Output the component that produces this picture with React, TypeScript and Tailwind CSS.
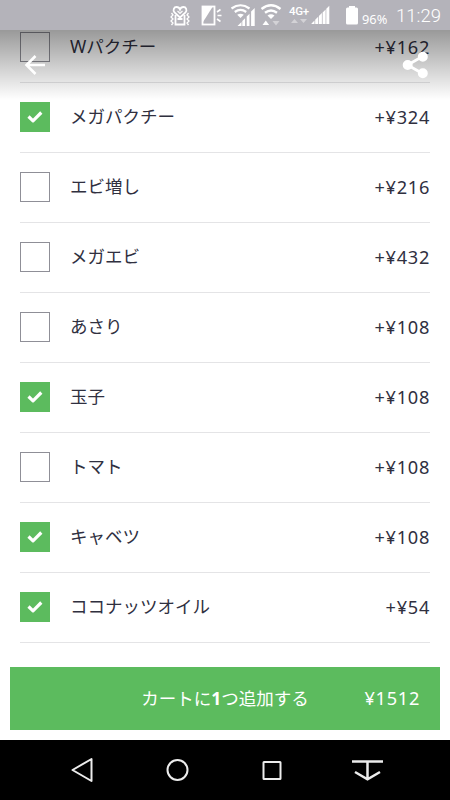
import React, { useState } from "react";

interface Topping {
  name: string;
  price: number;
  selected: boolean;
}

const initialToppings: Topping[] = [
  { name: "Wパクチー", price: 162, selected: false },
  { name: "メガパクチー", price: 324, selected: true },
  { name: "エビ増し", price: 216, selected: false },
  { name: "メガエビ", price: 432, selected: false },
  { name: "あさり", price: 108, selected: false },
  { name: "玉子", price: 108, selected: true },
  { name: "トマト", price: 108, selected: false },
  { name: "キャベツ", price: 108, selected: true },
  { name: "ココナッツオイル", price: 54, selected: true },
];

const BASE_PRICE = 918;

const StatusBar: React.FC = () => (
  <div className="relative z-20 flex h-[30px] shrink-0 items-start bg-[#b4b3ba] pl-[169px] text-white">
    {/* Vibrating heart, phone, wifi */}
    <svg width="116" height="30" viewBox="169 0 116 30" fill="none" stroke="white" strokeWidth="1.6">
      <path d="M180 17.500l-5.500-5c-2-2.500-.5-5.500 2-5.500 1.700 0 3 1 3.500 2.500.5-1.500 1.800-2.500 3.500-2.500 2.500 0 4 3 2 5.500z" strokeWidth="1.8" />
      <path d="M177.500 11l2.500 2.500 2.500-2.500" strokeWidth="1.200" />
      <path d="M175.500 15v9.500h9V15M177.500 19h5" strokeWidth="1.8" />
      <path d="M171.500 13l1.500 2-2 2 2 2-2 2 2 2-1.500 2M188.500 13l-1.500 2 2 2-2 2 2 2-2 2 1.500 2" strokeWidth="1.300" />
      <rect x="202.500" y="6.500" width="12" height="18" strokeWidth="1.8" />
      <path d="M203 7h9.500L203 22z" fill="white" stroke="none" />
      <path d="M217 12l3.500-2.500M217.500 15.500h4M217 19l3.500 2.500" />
      <path d="M231.500 8.500q9-6.500 18 0M234.800 12q5.700-4.300 11.400 0" strokeWidth="2.200" />
      <path d="M237.200 14.800q3.300-2 6.600 0l-3.300 3.300z" fill="white" stroke="none" />
      <path d="M237.500 26l4-4v4zM242.300 26v-5l2.800-2.800V26zM246.700 26v-9.500l2.800-2.800V26zM251.100 26V11.500l3.600-3.600V26z" fill="white" stroke="none" />
      <path d="M261.500 9q9.500-7.500 19 0M265 12.800q6-4.500 12 0" strokeWidth="2.400" />
      <path d="M267.500 15.500q3.500-2.500 7 0l-3.500 3.500z" fill="white" stroke="none" />
      <path d="M262.500 25l3.300-4.500 3.300 4.500z" fill="white" stroke="none" />
      <path d="M272.500 21h7l-3.500 4.500z" fill="#d3d2d6" stroke="none" />
    </svg>

    {/* Mobile network */}
    <div className="ml-[4px] w-[22px] pt-[5px]">
      <p className="font-['Roboto'] text-[11.5px] leading-[13px] font-medium tracking-[-0.3px]">4G+</p>
      <svg width="22" height="6" viewBox="0 0 22 6" fill="#d3d2d6">
        <path d="M2 5l3.500-4L9 5zM11 1h7l-3.500 4z" />
      </svg>
    </div>
    <svg width="50" height="30" viewBox="311 0 50 30" fill="white">
      <path d="M311.500 24v-.5l3-3V24zM315.200 24v-4.200l3-3V24zM318.900 24v-7.900l3-3V24zM322.600 24V12.400l3-3V24zM326.300 24V8.700l3-3V24z" />
      <path d="M349 6h6v1.500h1.500q1.500 0 1.500 1.500v14q0 1.500-1.500 1.500h-9q-1.500 0-1.500-1.500V9q0-1.500 1.500-1.500h1.500z" />
    </svg>
    <span className="ml-px w-[34px] pt-[10px] font-['Noto_Sans'] text-[12.8px] leading-[18px]">96%</span>
    <span className="pt-[5px] font-['Roboto'] text-[18.5px] leading-[22px] font-light whitespace-nowrap">11:29</span>
  </div>
);

const TopBar: React.FC = () => (
  <div className="absolute inset-x-0 top-0 z-10 flex h-[70px] items-start justify-between bg-linear-to-b from-black/40 to-transparent pt-[21px] pr-[21px] pl-[24px]">
    <button aria-label="戻る">
      <svg width="22" height="28" viewBox="0 0 22 28" fill="none" stroke="white" strokeWidth="2.600">
        <path d="M21 14H3M11.500 5L2.500 14l9 9" />
      </svg>
    </button>
    <button aria-label="共有">
      <svg width="27" height="28" viewBox="0 0 27 28" fill="white" stroke="white" strokeWidth="2.800">
        <path d="M20.500 5.500L5.500 14l15 8.500" fill="none" />
        <circle cx="20.800" cy="5.800" r="3.600" />
        <circle cx="5.700" cy="14" r="3.600" />
        <circle cx="20.800" cy="22.200" r="3.600" />
      </svg>
    </button>
  </div>
);

interface ToppingRowProps {
  topping: Topping;
  onToggle: () => void;
}

const ToppingRow: React.FC<ToppingRowProps> = ({ topping, onToggle }) => (
  <li
    onClick={onToggle}
    className="flex h-[70px] cursor-pointer items-start border-b border-[#e4e4e6] pt-[19px] text-[#30303f]"
  >
    {topping.selected ? (
      <span className="flex size-[30px] items-center justify-center bg-[#5cbb5e]">
        <svg width="16" height="14" viewBox="0 0 16 14" fill="none" stroke="white" strokeWidth="3.200">
          <path d="M1.500 6.500l4.500 4.300 8.300-8.300" strokeLinejoin="round" />
        </svg>
      </span>
    ) : (
      <span className="size-[30px] border border-[#8f8f97]" />
    )}
    <span className="ml-5 flex-1 text-[17.5px] leading-[29px]">{topping.name}</span>
    <span className="text-[18.2px] leading-[30px] tracking-[0.7px]">+¥{topping.price}</span>
  </li>
);

const NavigationBar: React.FC = () => (
  <nav className="flex h-[60px] shrink-0 items-center justify-center bg-black">
    <svg width="450" height="60" viewBox="0 0 450 60" fill="none" stroke="#ececec" strokeWidth="2">
      <path d="M91.500 19v22L72.500 30z" strokeLinejoin="round" />
      <circle cx="177.500" cy="30" r="10" />
      <rect x="263.500" y="22" width="17" height="17" rx="0.500" />
      <path d="M352 21.500h31M367.500 21.500V39M355 32l12.500 7.300 12.500-7.300" strokeWidth="2.500" />
    </svg>
  </nav>
);

const App: React.FC = () => {
  const [toppings, setToppings] = useState<Topping[]>(initialToppings);

  const extra = toppings.reduce((sum, t) => sum + (t.selected ? t.price : 0), 0);
  const total = BASE_PRICE + extra;

  const toggle = (index: number) => {
    setToppings((prev) =>
      prev.map((t, i) => (i === index ? { ...t, selected: !t.selected } : t))
    );
  };

  return (
    <div className="flex h-[800px] w-[450px] flex-col overflow-hidden bg-white font-['Noto_Sans','Noto_Sans_CJK_JP',sans-serif]">
      <StatusBar />

      <main className="relative flex-1 overflow-hidden">
        <TopBar />
        <ul className="-mt-[17px] px-5">
          {toppings.map((topping, index) => (
            <ToppingRow key={topping.name} topping={topping} onToggle={() => toggle(index)} />
          ))}
        </ul>

        {/* Add to cart */}
        <button className="mx-[10px] mt-6 grid h-[63px] w-[430px] grid-cols-[1fr_auto_1fr] items-center bg-[#5cbb5e] px-5 text-white">
          <span />
          <span className="text-[17.5px]">
            カートに<b>1</b>つ追加する
          </span>
          <span className="text-right text-[18.2px] tracking-[0.7px]">¥{total}</span>
        </button>
      </main>

      <NavigationBar />
    </div>
  );
};

export default App;
